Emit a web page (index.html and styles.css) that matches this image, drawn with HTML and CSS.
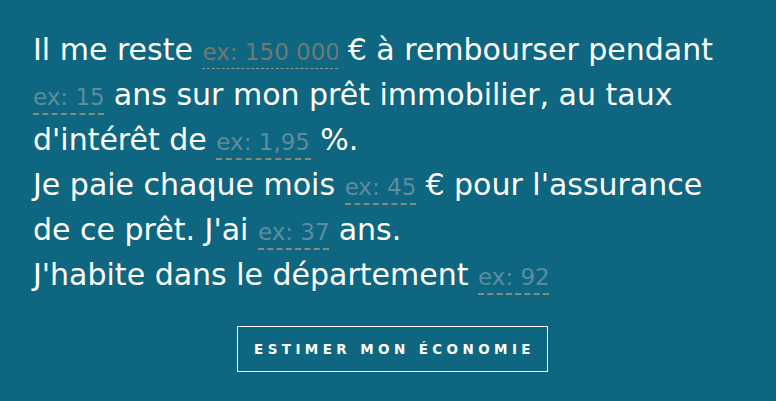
FILE: index.html
```html
<!DOCTYPE html>
<html lang="fr">
<head>
    <meta charset="UTF-8">
    <meta name="viewport" content="width=device-width, initial-scale=1.0">
    <title>Simulateur de renégociation</title>
    <link rel="stylesheet" href="styles.css">
</head>
<body>

    <form class="simulator">
        <p class="sentence">
            Il me reste <input type="text" class="field field-amount" placeholder="ex: 150 000"> € à rembourser pendant
            <input type="text" class="field field-short" placeholder="ex: 15"> ans sur mon prêt immobilier, au taux
            d'intérêt de <input type="text" class="field field-rate" placeholder="ex: 1,95"> %.<br>
            Je paie chaque mois <input type="text" class="field field-short" placeholder="ex: 45"> € pour l'assurance
            de ce prêt. J'ai <input type="text" class="field field-short" placeholder="ex: 37"> ans.<br>
            J'habite dans le département <input type="text" class="field field-short" placeholder="ex: 92">
        </p>

        <div class="actions">
            <button type="button" class="estimate">Estimer mon économie</button>
        </div>
    </form>

</body>
</html>
```

FILE: styles.css
```css
* {
    margin: 0;
    padding: 0;
    box-sizing: border-box;
}

body {
    background-color: #0e6680;
    color: white;
    font-family: 'DejaVu Sans', sans-serif;
}

.simulator {
    padding: 27px 24px 0 33px;
}

/* Phrase with inline inputs */
.sentence {
    max-width: 700px;
    font-size: 30px;
    line-height: 45px;
}

.field {
    font-family: 'DejaVu Sans', sans-serif;
    font-size: 23px;
    background: transparent;
    color: white;
    border: none;
    border-bottom: 2px dashed #8a8977;
    padding: 0 0 3px;
    outline: none;
}

.field::placeholder {
    color: #5a8e9e;
}

.field-short {
    width: 3.1em;
}

.field-rate {
    width: 4.1em;
}

/* first amount is shown with a finer underline */
.field-amount {
    width: 5.9em;
    border-bottom: 1px dashed #8f9896;
    padding-bottom: 3px;
}

.field-amount::placeholder {
    color: #6e7a73;
}

/* Submit */
.actions {
    display: flex;
    justify-content: center;
    margin-top: 29px;
}

.estimate {
    font-family: 'DejaVu Sans', sans-serif;
    font-size: 13.5px;
    line-height: 14px;
    font-weight: bold;
    letter-spacing: 4.4px;
    text-transform: uppercase;
    color: white;
    background: transparent;
    border: 1px solid white;
    padding: 15px 12px 15px 16px;
    cursor: pointer;
}
```
